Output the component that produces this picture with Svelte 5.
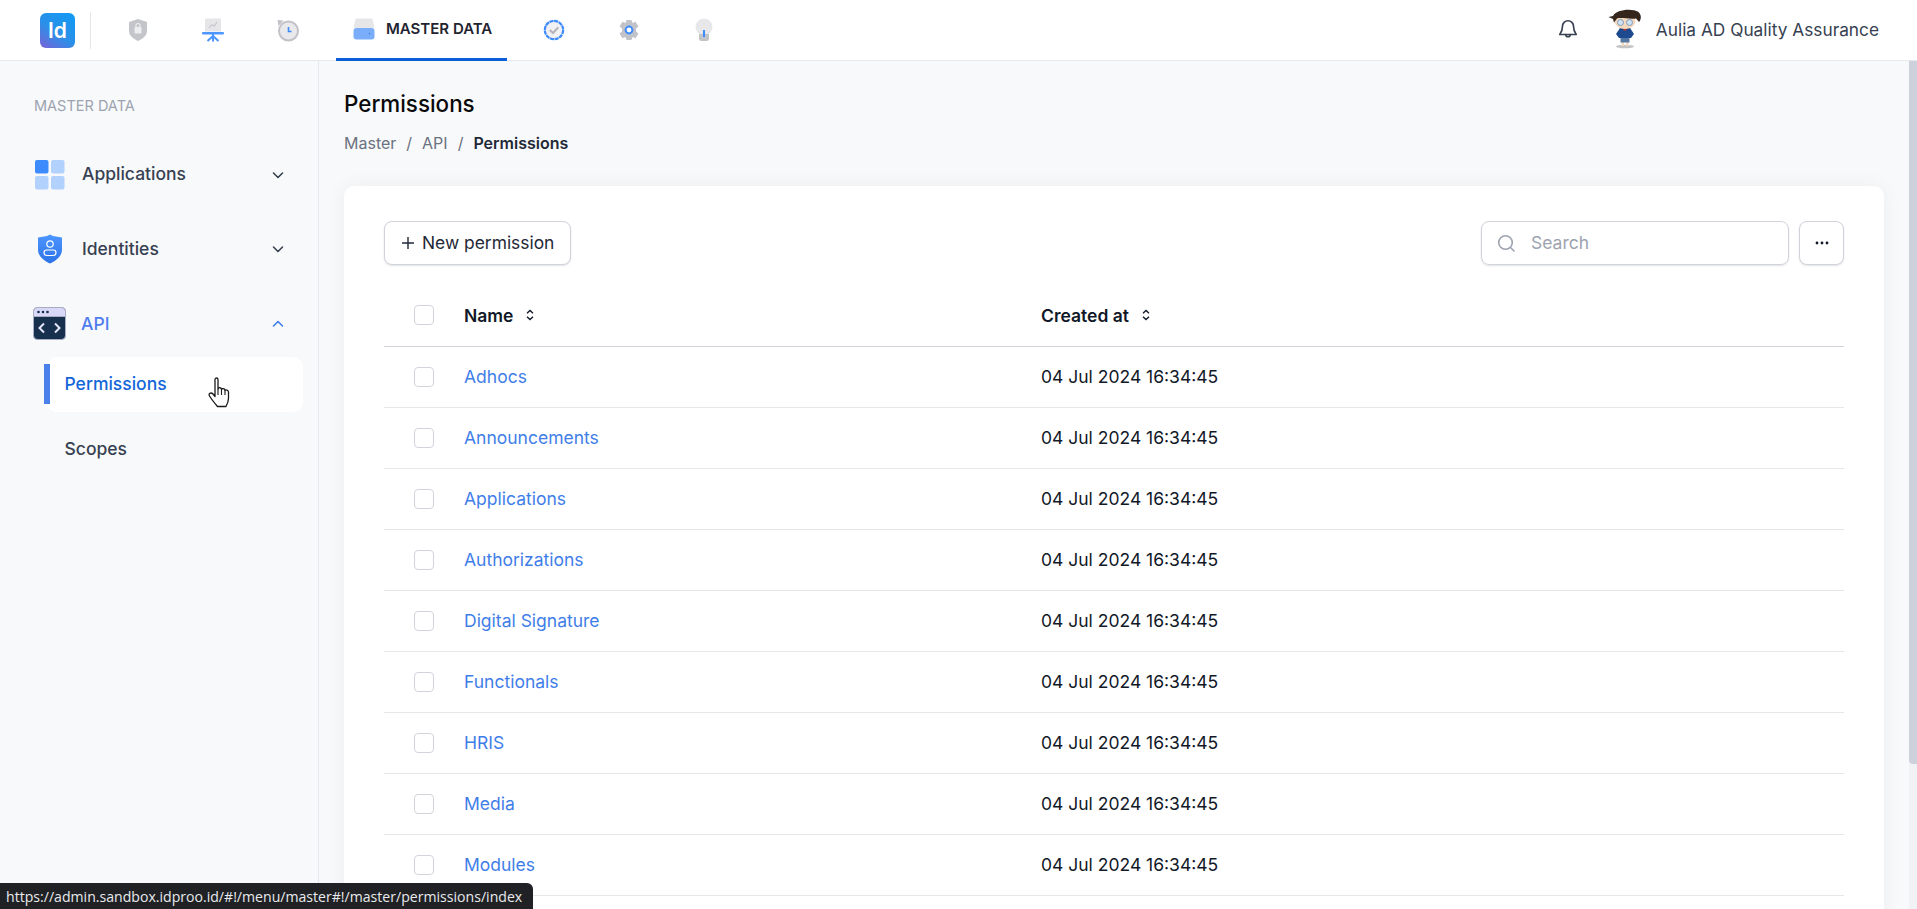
<script lang="ts">
	const rows = [
		'Adhocs',
		'Announcements',
		'Applications',
		'Authorizations',
		'Digital Signature',
		'Functionals',
		'HRIS',
		'Media',
		'Modules'
	]
	const createdAt = '04 Jul 2024 16:34:45'
</script>

<header class="topbar">
	<div class="logo">Id</div>
	<div class="divider"></div>
	<nav class="modules">
		<span class="mod" style="left: 138px">
			<svg width="20" height="24" viewBox="0 0 20 24">
				<path d="M10 1 L19 4 V13 C19 18 14 21 10 23 C6 21 1 18 1 13 V4 Z" fill="#c4c5ca" />
				<rect x="6.5" y="9" width="7" height="6.5" rx="1.2" fill="#eeeef0" />
				<path d="M8 9 V7.5 A2 2 0 0 1 12 7.5 V9" stroke="#eeeef0" stroke-width="1.2" fill="none" />
			</svg>
		</span>
		<span class="mod" style="left: 213px">
			<svg width="22" height="24" viewBox="0 0 22 24">
				<rect x="3" y="0.5" width="16" height="13" fill="#e6e6e9" />
				<path d="M7 10 L10 6.5 L12 8.5 L15 4" stroke="#bdbdc2" stroke-width="1" fill="none" />
				<rect x="0" y="14" width="22" height="2.5" rx="1" fill="#4d96ff" />
				<path d="M11 16 V23.5 M11 18 L5.5 23 M11 18 L16.5 23" stroke="#4d96ff" stroke-width="2" fill="none" />
			</svg>
		</span>
		<span class="mod" style="left: 288px">
			<svg width="23" height="23" viewBox="0 0 23 23">
				<circle cx="12" cy="12" r="9.5" fill="#e9e9ec" stroke="#c2c3c8" stroke-width="2" />
				<path d="M1 1 L7 1.5 L2 7 Z" fill="#c2c3c8" />
				<path d="M12 8 V12.5 H15" stroke="#3d8bfd" stroke-width="1.6" fill="none" />
			</svg>
		</span>
		<span class="mod active">
			<svg width="22" height="22" viewBox="0 0 22 22">
				<path d="M4 0.5 H18 A2 2 0 0 1 20 2.5 L21.5 10 H0.5 L2 2.5 A2 2 0 0 1 4 0.5 Z" fill="#e6e6e9" />
				<rect x="0.5" y="10" width="21" height="11.5" rx="3" fill="#7aadfa" />
				<circle cx="16.5" cy="15.5" r="0.8" fill="#3d7fe6" />
			</svg>
			<span class="mod-name">MASTER DATA</span>
		</span>
		<span class="mod" style="left: 554px">
			<svg width="22" height="22" viewBox="0 0 22 22">
				<circle cx="11" cy="11" r="9.2" fill="#f1f1f3" stroke="#3d8bfd" stroke-width="2.2" stroke-dasharray="4.2 0.6" />
				<path d="M6.8 11 L10 14 L15.2 8.3" stroke="#b2b2b8" stroke-width="2" fill="none" />
			</svg>
		</span>
		<span class="mod" style="left: 629px">
			<svg width="22" height="22" viewBox="0 0 22 22">
				<path d="M8.5 1 H13.5 L14.5 4 L17.5 2.8 L20.5 7.5 L18 9.5 V12.5 L20.5 14.5 L17.5 19.2 L14.5 18 L13.5 21 H8.5 L7.5 18 L4.5 19.2 L1.5 14.5 L4 12.5 V9.5 L1.5 7.5 L4.5 2.8 L7.5 4 Z" fill="#c2c3c8" />
				<circle cx="11" cy="11" r="3.4" fill="#fff" stroke="#3d8bfd" stroke-width="2" />
			</svg>
		</span>
		<span class="mod" style="left: 704px">
			<svg width="18" height="24" viewBox="0 0 18 24">
				<path d="M9 0.5 A8.5 8.5 0 0 1 17.5 9 C17.5 12 15.5 14 14 16 H4 C2.5 14 0.5 12 0.5 9 A8.5 8.5 0 0 1 9 0.5 Z" fill="#e8e8eb" />
				<path d="M4 16 H14 V20.5 A2.5 2.5 0 0 1 11.5 23 H6.5 A2.5 2.5 0 0 1 4 20.5 Z" fill="#c2c3c8" />
				<rect x="8" y="12" width="2" height="7" fill="#3d8bfd" />
			</svg>
		</span>
	</nav>
	<div class="account">
		<svg class="bell" width="22" height="22" viewBox="0 0 24 24" fill="none" stroke="#374151" stroke-width="1.8" stroke-linecap="round" stroke-linejoin="round">
			<path d="M18 9 A6 6 0 0 0 6 9 C6 14 4.5 16 3 18 H21 C19.5 16 18 14 18 9 Z" />
			<path d="M9.5 18 A2.5 2.5 0 0 0 14.5 18" />
		</svg>
		<svg class="avatar" width="34" height="40" viewBox="0 0 34 40">
			<ellipse cx="17" cy="37.5" rx="9" ry="1.8" fill="#c4c4c4" />
			<rect x="13.5" y="31" width="2.5" height="6" fill="#f2d9c4" />
			<rect x="18" y="31" width="2.5" height="6" fill="#f2d9c4" />
			<rect x="12.5" y="28" width="9" height="5.5" fill="#5578a3" />
			<path d="M12 19 H22 L26 25 L23 29 H11 L8 25 Z" fill="#1d4a8f" />
			<rect x="15.5" y="19" width="3" height="2.5" fill="#c0392b" />
			<ellipse cx="17" cy="12.5" rx="10.5" ry="7.5" fill="#f4d9bf" />
			<circle cx="12.5" cy="13.5" r="3" fill="#cfe2f3" stroke="#6b8cb0" stroke-width="0.8" />
			<circle cx="21.5" cy="13.5" r="3" fill="#cfe2f3" stroke="#6b8cb0" stroke-width="0.8" />
			<path d="M0.5 8 L5 7 C8 0.5 24 -1 30.5 3 C33.5 6 33.5 10 31 13 L28 9.5 C21 10.5 13 8 9 9.5 L6 13.5 L5 10 Z" fill="#35261c" />
		</svg>
		<span class="user">Aulia AD Quality Assurance</span>
	</div>
</header>

<div class="shell">
	<aside class="sidebar">
		<div class="section-label">MASTER DATA</div>

		<div class="group">
			<svg class="group-icon" width="30" height="30" viewBox="0 0 30 30">
				<rect width="13.5" height="13.5" rx="2" fill="#3d8bfd" />
				<rect x="16" width="13.5" height="13.5" rx="2" fill="#b3d1fd" />
				<rect y="16" width="13.5" height="13.5" rx="2" fill="#b3d1fd" />
				<rect x="16" y="16" width="13.5" height="13.5" rx="2" fill="#b3d1fd" />
			</svg>
			<span class="group-name">Applications</span>
			<svg class="chev" width="14" height="14" viewBox="0 0 14 14" fill="none" stroke="#374151" stroke-width="1.6" stroke-linecap="round" stroke-linejoin="round"><path d="M2.5 5 L7 9.5 L11.5 5" /></svg>
		</div>

		<div class="group">
			<svg class="group-icon" width="30" height="30" viewBox="0 0 30 30">
				<defs>
					<linearGradient id="shieldFill" x1="0" y1="0" x2="0" y2="1">
						<stop offset="0" stop-color="#4d96ff" />
						<stop offset="1" stop-color="#2c74e8" />
					</linearGradient>
				</defs>
				<path d="M15 0.5 L18 2 L27 3.5 V16 C27 22 21 27 15 29.5 C9 27 3 22 3 16 V3.5 L12 2 Z" fill="url(#shieldFill)" />
				<circle cx="15" cy="10" r="3.2" fill="none" stroke="#fff" stroke-width="1.2" />
				<rect x="9" y="16" width="12" height="5.5" rx="2.7" fill="none" stroke="#fff" stroke-width="1.2" />
			</svg>
			<span class="group-name">Identities</span>
			<svg class="chev" width="14" height="14" viewBox="0 0 14 14" fill="none" stroke="#374151" stroke-width="1.6" stroke-linecap="round" stroke-linejoin="round"><path d="M2.5 5 L7 9.5 L11.5 5" /></svg>
		</div>

		<div class="group open">
			<svg class="group-icon api" width="33" height="33" viewBox="0 0 33 33">
				<rect x="0.5" y="0.5" width="32" height="32" rx="4" fill="#16304d" stroke="#a9adc4" />
				<path d="M4.5 0.5 H28.5 A4 4 0 0 1 32.5 4.5 V9.5 H0.5 V4.5 A4 4 0 0 1 4.5 0.5 Z" fill="#d9d8f8" stroke="#a9adc4" />
				<circle cx="5.5" cy="5" r="1.3" fill="#16304d" />
				<circle cx="10" cy="5" r="1.3" fill="#16304d" />
				<circle cx="14.5" cy="5" r="1.3" fill="#16304d" />
				<path d="M11 16.5 L6.5 21 L11 25.5 M22 16.5 L26.5 21 L22 25.5" fill="none" stroke="#e6e6fa" stroke-width="2" />
			</svg>
			<span class="group-name">API</span>
			<svg class="chev" width="14" height="14" viewBox="0 0 14 14" fill="none" stroke="#3f7ee8" stroke-width="1.6" stroke-linecap="round" stroke-linejoin="round"><path d="M2.5 9 L7 4.5 L11.5 9" /></svg>
		</div>

		<div class="sub-item current">Permissions</div>
		<div class="sub-item">Scopes</div>
	</aside>

	<main class="content">
		<h1>Permissions</h1>
		<div class="crumbs">
			<span>Master</span><i>/</i><span>API</span><i>/</i><b>Permissions</b>
		</div>

		<section class="card">
			<div class="toolbar">
				<button class="btn">
					<svg width="14" height="14" viewBox="0 0 14 14" stroke="#1f2937" stroke-width="1.4"><path d="M7 1 V13 M1 7 H13" /></svg>
					<span class="btn-label">New permission</span>
				</button>
				<div class="search">
					<svg width="19" height="19" viewBox="0 0 19 19" fill="none" stroke="#9ca3af" stroke-width="1.6" stroke-linecap="round"><circle cx="8.5" cy="8.5" r="6.8" /><path d="M13.5 13.5 L17 17" /></svg>
					<span class="btn-label">Search</span>
				</div>
				<button class="btn more" aria-label="More">
					<svg width="14" height="4" viewBox="0 0 14 4" fill="#111827"><circle cx="2" cy="2" r="1.4" /><circle cx="7" cy="2" r="1.4" /><circle cx="12" cy="2" r="1.4" /></svg>
				</button>
			</div>

			<table>
				<thead>
					<tr>
						<th class="check-col"><span class="check"></span></th>
						<th class="name-col">
							<span class="sortable">Name
								<svg width="8" height="12" viewBox="0 0 8 12" fill="none" stroke="#111827" stroke-width="1.4"><path d="M1 4.2 L4 1.5 L7 4.2 M1 7.8 L4 10.5 L7 7.8" /></svg>
							</span>
						</th>
						<th class="date-col">
							<span class="sortable">Created at
								<svg width="8" height="12" viewBox="0 0 8 12" fill="none" stroke="#111827" stroke-width="1.4"><path d="M1 4.2 L4 1.5 L7 4.2 M1 7.8 L4 10.5 L7 7.8" /></svg>
							</span>
						</th>
					</tr>
				</thead>
				<tbody>
					{#each rows as name (name)}
						<tr>
							<td class="check-col"><span class="check"></span></td>
							<td><a href="#permissions">{name}</a></td>
							<td class="date-col">{createdAt}</td>
						</tr>
					{/each}
				</tbody>
			</table>
		</section>
	</main>

	<div class="scrollbar"><div class="thumb"></div></div>
</div>

<!-- browser link preview and mouse pointer, both lie over the page -->
<div class="status">https://admin.sandbox.idproo.id/#!/menu/master#!/master/permissions/index</div>
<svg class="pointer" width="24" height="31" viewBox="0 0 24 31">
	<path d="M7 2.5 C7 0.5 10 0.5 10 2.5 V12 C10.5 10 13.5 10.5 13.5 12.5 C14 11 17 11.5 17 13.5 C17.5 12.5 20.5 13 20.5 15 V21 C20.5 25 19.5 27 18 29.5 H9.5 C7 26.5 4 23 1.5 19 C0 16.5 3 15 5 17 L7 19.5 Z" fill="#fff" stroke="#1b1b1b" stroke-width="1.3" stroke-linejoin="round" />
	<path d="M10 12 V18 M13.5 12.5 V18 M17 13.5 V18" stroke="#1b1b1b" stroke-width="1.1" />
</svg>

<style>
	:global(body) {
		height: 909px;
		overflow: hidden;
		background: #f8f9fb;
		font-family: Inter, 'Noto Sans', sans-serif;
		color: #111827;
	}

	.topbar {
		position: relative;
		height: 60px;
		background: #fff;
		border-bottom: 1px solid #e8e9ec;
		display: flex;
		align-items: center;
	}

	.logo {
		margin-left: 40px;
		width: 35px;
		height: 35px;
		border-radius: 6px;
		background: linear-gradient(35deg, #7a62d6 0%, #2b8fe8 45%, #0f9bf5 100%);
		color: #fff;
		font-weight: 600;
		font-size: 21px;
		display: flex;
		align-items: center;
		justify-content: center;
	}

	.divider {
		margin-left: 15px;
		width: 1px;
		height: 37px;
		background: #e5e7eb;
	}

	.mod {
		position: absolute;
		top: 0;
		height: 60px;
		display: flex;
		align-items: center;
		transform: translateX(-50%);
	}

	.mod.active {
		left: 336px;
		transform: none;
		width: 171px;
		padding-left: 17px;
		box-sizing: border-box;
		gap: 11px;
		height: 61px;
		border-bottom: 3px solid #0b5ed7;
		font-size: 15px;
		font-weight: 600;
		color: #1f2430;
		white-space: nowrap;
	}

	.mod-name {
		padding-bottom: 2px;
	}

	.account {
		margin-left: auto;
		display: flex;
		align-items: center;
		padding-right: 38px;
	}

	.bell {
		margin-right: 29px;
		transform: translateY(-1px);
	}

	.avatar {
		margin-right: 14px;
		transform: translateY(-1px);
	}

	.user {
		font-size: 17.3px;
		color: #374151;
		padding-bottom: 2px;
	}

	.shell {
		display: flex;
		height: 848px;
	}

	.sidebar {
		width: 318px;
		flex: none;
		border-right: 1px solid #e8e9ec;
	}

	.section-label {
		margin: 35px 0 28.5px 34px;
		font-size: 14.5px;
		line-height: 20px;
		color: #9ca3af;
	}

	.group {
		height: 60px;
		margin-bottom: 14.5px;
		padding: 0 33px 0 34px;
		display: flex;
		align-items: center;
		color: #374151;
	}

	.group-icon {
		flex: none;
		width: 30px;
		margin-left: 0.5px;
	}

	.group-icon.api {
		width: 33px;
		margin: 0 -2px 0 -1.5px;
	}

	.group-name {
		margin-left: 17.5px;
		font-size: 17.5px;
		font-weight: 450;
		padding-bottom: 2px;
	}

	.group.open {
		margin-bottom: 3.5px;
	}

	.group.open .group-name {
		color: #4f7df0;
		padding-bottom: 0;
	}

	.chev {
		margin-left: auto;
	}

	.sub-item {
		position: relative;
		height: 55px;
		box-sizing: border-box;
		margin: 0 15px 10px 47px;
		padding: 0 0 2px 17.5px;
		display: flex;
		align-items: center;
		border-radius: 10px;
		font-size: 17.5px;
		font-weight: 450;
		color: #374151;
	}

	.sub-item.current {
		background: #fff;
		color: #1366d9;
		font-weight: 500;
	}

	.sub-item.current::before {
		content: '';
		position: absolute;
		left: -3px;
		top: 7px;
		bottom: 8px;
		width: 6px;
		background: #4a80ea;
	}

	.content {
		flex: 1;
		min-width: 0;
		padding: 28px 25px 0;
		overflow: hidden;
	}

	h1 {
		margin: 0;
		font-size: 22.4px;
		line-height: 30px;
		font-weight: 500;
		color: #0a0a0a;
	}

	.crumbs {
		margin-top: 12px;
		height: 24px;
		display: flex;
		align-items: center;
		font-size: 16px;
		color: #6b7280;
	}

	.crumbs i {
		font-style: normal;
		margin: 0 10px;
	}

	.crumbs b {
		font-weight: 600;
		color: #1f2937;
	}

	.card {
		margin-top: 31px;
		min-height: 720px;
		padding: 35px 40px 0;
		background: #fff;
		border-radius: 10px;
		box-shadow: 0 0 20px rgba(17, 24, 39, 0.05);
	}

	.toolbar {
		display: flex;
		align-items: center;
		gap: 10px;
	}

	.btn {
		height: 44px;
		padding: 0 16px;
		display: inline-flex;
		align-items: center;
		gap: 7px;
		background: #fff;
		border: 1px solid #d1d3dc;
		border-radius: 8px;
		box-shadow: 0 1px 2px rgba(17, 24, 39, 0.12);
		font: inherit;
		font-size: 17.4px;
		color: #1f2937;
	}

	.btn-label {
		padding-bottom: 2px;
	}

	.search {
		margin-left: auto;
		width: 308px;
		height: 44px;
		box-sizing: border-box;
		padding-left: 15px;
		display: flex;
		align-items: center;
		gap: 15px;
		border: 1px solid #d1d3dc;
		border-radius: 8px;
		box-shadow: 0 1px 2px rgba(17, 24, 39, 0.12);
		font-size: 17.5px;
		color: #9ca3af;
	}

	.btn.more {
		width: 45px;
		padding: 0;
		justify-content: center;
	}

	table {
		margin-top: 20px;
		width: 100%;
		border-collapse: collapse;
		table-layout: fixed;
		font-size: 17.5px;
	}

	th {
		height: 61px;
		box-sizing: border-box;
		padding: 0;
		text-align: left;
		font-weight: 600;
		border-bottom: 1px solid #d0d3dd;
	}

	td {
		height: 61px;
		box-sizing: border-box;
		padding: 0;
		border-bottom: 1px solid #e5e7eb;
		color: #111827;
	}

	th.check-col,
	td.check-col {
		width: 80px;
		padding: 0;
		text-align: center;
		font-size: 0;
	}

	.name-col {
		width: 576px;
	}

	.date-col {
		padding-left: 1px;
	}

	.check {
		display: inline-block;
		width: 20px;
		height: 20px;
		box-sizing: border-box;
		border: 1px solid #d1d5db;
		border-radius: 4px;
		vertical-align: middle;
	}

	.sortable {
		display: inline-flex;
		align-items: center;
		gap: 13px;
	}

	a {
		color: #3f7ee8;
		text-decoration: none;
	}

	.scrollbar {
		width: 8px;
		flex: none;
		background: #f1f2f5;
	}

	.thumb {
		height: 703px;
		background: #cdd1dc;
		border-bottom-left-radius: 4px;
	}

	.status {
		position: fixed;
		left: 0;
		bottom: 0;
		height: 26px;
		padding: 0 11px 0 6px;
		display: flex;
		align-items: center;
		background: #202124;
		border-top-right-radius: 6px;
		font-family: 'Open Sans', sans-serif;
		font-size: 14.1px;
		color: #e8eaed;
		white-space: nowrap;
	}

	.pointer {
		position: fixed;
		left: 208px;
		top: 377px;
	}
</style>
